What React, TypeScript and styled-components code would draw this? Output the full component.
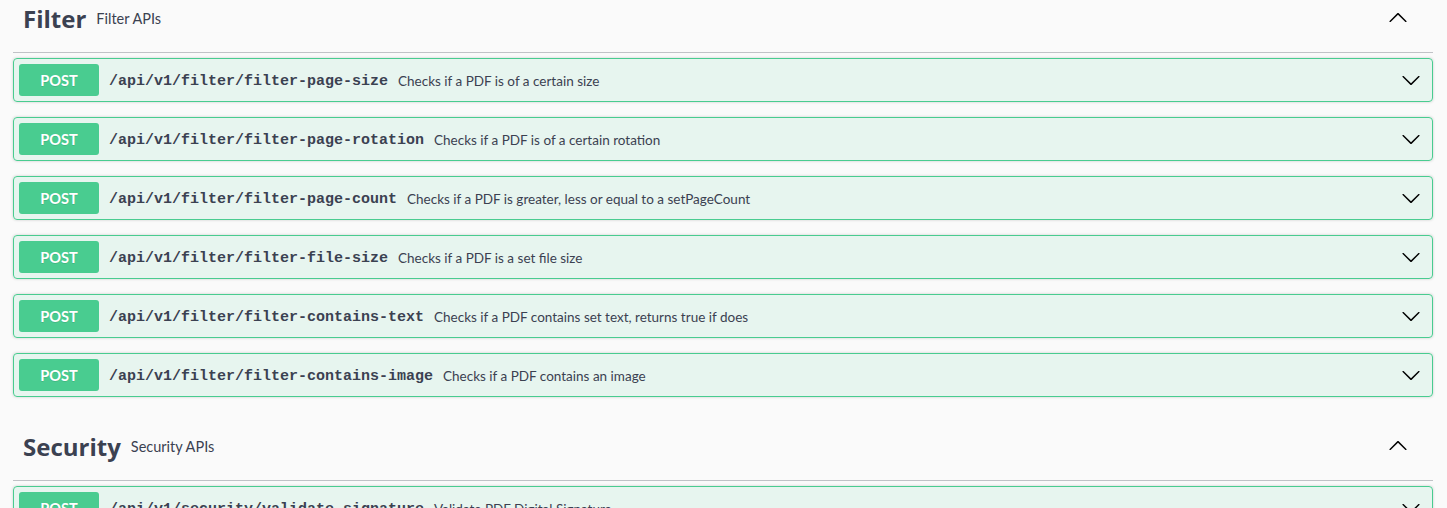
import React from "react";
import styled, { createGlobalStyle } from "styled-components";

const Global = createGlobalStyle`
  html, body { margin: 0; padding: 0; background: #fafafa; }
  body { font-family: "Lato", "Open Sans", sans-serif; color: #3b4151; overflow: hidden; }
`;

const Page = styled.div`
  margin: -16px 14px 0 13px;
`;

const Section = styled.section`
  margin: 0;
`;

const TagHeader = styled.h3`
  display: flex;
  align-items: center;
  box-sizing: border-box;
  height: 69px;
  margin: 0 0 5px;
  padding: 10px 20px 10px 10px;
  border-bottom: 1px solid rgba(59, 65, 81, 0.3);
  font-family: "Open Sans", sans-serif;
  font-size: 24px;
  font-weight: 700;
  color: #3b4151;
`;

const TagName = styled.span`
  letter-spacing: 0;
`;

const TagDesc = styled.small`
  flex: 1;
  padding: 0 10px;
  font-family: "Lato", sans-serif;
  font-size: 14.5px;
  font-weight: 400;
  color: #3b4151;
`;

const ArrowButton = styled.button<{ $pad: number }>`
  display: flex;
  align-items: center;
  justify-content: center;
  border: none;
  background: none;
  padding: 0 ${(p) => p.$pad}px 0 0;
  margin: 0;
  cursor: pointer;
  color: #000;
`;

const OpBlock = styled.div`
  display: flex;
  align-items: center;
  box-sizing: border-box;
  height: 44px;
  margin: 0 0 15px;
  padding: 5px 0 5px 5px;
  border: 1px solid #49cc90;
  border-radius: 4px;
  background: rgba(73, 204, 144, 0.1);
  box-shadow: 0 0 3px rgba(0, 0, 0, 0.19);
`;

const Method = styled.span`
  display: inline-flex;
  align-items: center;
  justify-content: center;
  width: 80px;
  height: 32px;
  border-radius: 3px;
  background: #49cc90;
  color: #fff;
  font-family: "Lato", sans-serif;
  font-size: 14.5px;
  font-weight: 700;
  text-shadow: 0 1px 0 rgba(0, 0, 0, 0.1);
`;

const Path = styled.span`
  padding: 2px 10px 0;
  font-family: "Liberation Mono", monospace;
  font-size: 15px;
  font-weight: 700;
  color: #3b4151;
`;

const Desc = styled.span`
  flex: 1;
  padding-top: 2px;
  font-family: "Lato", sans-serif;
  font-size: 13.5px;
  color: #3b4151;
`;

const Chevron = ({ up }: { up?: boolean }) => (
  <svg width="20" height="20" viewBox="0 0 20 20" aria-hidden="true">
    <path
      fill="currentColor"
      transform={up ? "rotate(180 10 10)" : undefined}
      d="M17.418 6.109c.272-.268.709-.268.979 0s.271.701 0 .969l-7.908 7.83c-.27.268-.707.268-.979 0l-7.908-7.830c-.27-.268-.27-.701 0-.969.271-.268.709-.268.979 0L10 13.25l7.418-7.141z"
    />
  </svg>
);

type Op = { path: string; desc: string };

const filterOps: Op[] = [
  { path: "/api/v1/filter/filter-page-size", desc: "Checks if a PDF is of a certain size" },
  { path: "/api/v1/filter/filter-page-rotation", desc: "Checks if a PDF is of a certain rotation" },
  { path: "/api/v1/filter/filter-page-count", desc: "Checks if a PDF is greater, less or equal to a setPageCount" },
  { path: "/api/v1/filter/filter-file-size", desc: "Checks if a PDF is a set file size" },
  { path: "/api/v1/filter/filter-contains-text", desc: "Checks if a PDF contains set text, returns true if does" },
  { path: "/api/v1/filter/filter-contains-image", desc: "Checks if a PDF contains an image" },
];

const securityOps: Op[] = [
  { path: "/api/v1/security/validate-signature", desc: "Validate PDF Digital Signature" },
];

const Tag = ({ name, desc, ops }: { name: string; desc: string; ops: Op[] }) => (
  <Section>
    <TagHeader>
      <TagName>{name}</TagName>
      <TagDesc>{desc}</TagDesc>
      <ArrowButton $pad={5}>
        <Chevron up />
      </ArrowButton>
    </TagHeader>
    {ops.map((op) => (
      <OpBlock key={op.path}>
        <Method>POST</Method>
        <Path>{op.path}</Path>
        <Desc>{op.desc}</Desc>
        <ArrowButton $pad={11}>
          <Chevron />
        </ArrowButton>
      </OpBlock>
    ))}
  </Section>
);

export default function App() {
  return (
    <>
      <Global />
      <Page>
        <Tag name="Filter" desc="Filter APIs" ops={filterOps} />
        <Tag name="Security" desc="Security APIs" ops={securityOps} />
      </Page>
    </>
  );
}
